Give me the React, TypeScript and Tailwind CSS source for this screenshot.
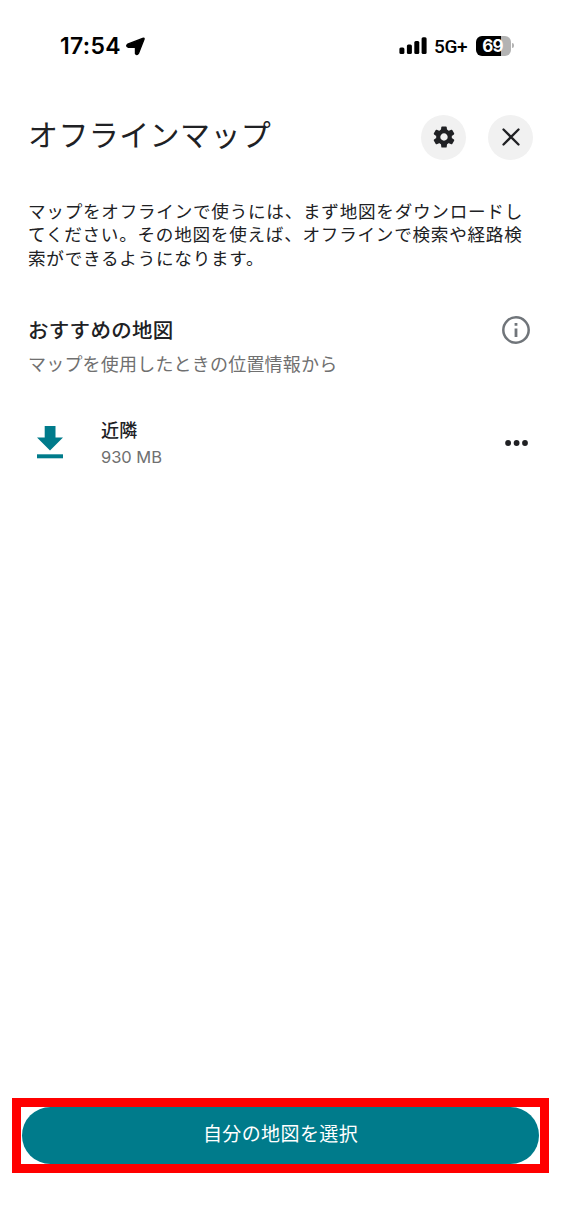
import React from "react";

function StatusBar() {
  return (
    <div className="flex h-[91px] items-center justify-between pl-[60px] pr-[47px] text-black">
      <div className="flex items-center gap-[5px]">
        <span className="mt-px font-['Inter',sans-serif] text-[23px] font-semibold leading-none tracking-[0.3px]">
          17:54
        </span>
        <svg width="19" height="19" viewBox="0 0 19 19" className="mt-px fill-current stroke-current" strokeWidth="1.4" strokeLinejoin="round">
          <path d="M16.7 1.4Q18.6.8 17.9 2.5L12.4 16.5Q11 18.8 9.5 16.5V11Q9.4 10.2 8.6 10.2H2.1Q-.4 9.2 1.7 7.2Z" />
        </svg>
      </div>

      <div className="flex items-center">
        <svg width="28" height="18" viewBox="0 0 28 18" className="fill-current">
          <rect x="0.4" y="10.5" width="5" height="6.5" rx="1.5" />
          <rect x="7.9" y="7.5" width="5" height="9.5" rx="1.5" />
          <rect x="15.3" y="4" width="5" height="13" rx="1.5" />
          <rect x="22.6" y="0.2" width="5" height="16.8" rx="1.5" />
        </svg>
        <span className="ml-[7px] mt-px w-[42px] font-['Roboto',sans-serif] text-[19px] font-medium leading-none tracking-[-0.4px]">
          5G+
        </span>
        <div className="flex h-5 w-[35px] items-center justify-center overflow-hidden rounded-[6px] bg-[linear-gradient(to_right,#000_25px,#b3b3b3_25px)] pr-[2px] pt-[2px]">
          <span className="font-['Inter',sans-serif] text-[17px] font-bold leading-none tracking-[-0.8px] text-white">
            69
          </span>
        </div>
        <span className="ml-px h-[5px] w-[2px] rounded-r-full bg-[#b3b3b3]" />
      </div>
    </div>
  );
}

const teeth = [0, 60, 120, 180, 240, 300];

function GearIcon() {
  return (
    <svg width="22" height="22" viewBox="-11 -11 22 22" className="fill-current">
      <circle r="5.8" fill="none" stroke="currentColor" strokeWidth="4.2" />
      {teeth.map((a) => (
        <path
          key={a}
          d="M-3.1-6.8-2.7-9.9Q-2.6-10.6-1.9-10.6H1.9Q2.6-10.6 2.7-9.9L3.1-6.8Z"
          transform={`rotate(${a})`}
        />
      ))}
    </svg>
  );
}

function DownloadIcon() {
  return (
    <svg width="26" height="33" viewBox="0 0 26 33" className="-mt-[5px] fill-[#007b8b]">
      <path d="M7.7 0H18.5V11.5H26L13 24.5 0 11.5H7.7Z" />
      <path d="M0 28.3H26V32.3H0Z" />
    </svg>
  );
}

export default function App() {
  return (
    <main className="flex h-[1221px] w-[561px] flex-col bg-white font-['Noto_Sans_CJK_JP',sans-serif] text-[#202124]">
      <StatusBar />

      {/* Title */}
      <header className="mt-px flex h-[90px] items-center justify-between px-[28px]">
        <h1 className="-mt-[8px] text-[30px] font-normal leading-none tracking-[0.4px]">
          オフラインマップ
        </h1>
        <div className="flex gap-[22px]">
          <button className="flex size-[45px] items-center justify-center rounded-full bg-[#f1f1f1]">
            <GearIcon />
          </button>
          <button className="flex size-[45px] items-center justify-center rounded-full bg-[#f1f1f1]">
            <svg width="18" height="18" viewBox="0 0 18 18" fill="none" stroke="currentColor" strokeWidth="2.3" strokeLinecap="round">
              <path d="M1.5 1.5 16.5 16.5M16.5 1.5 1.5 16.5" />
            </svg>
          </button>
        </div>
      </header>

      <p className="mt-[17px] whitespace-nowrap pl-[28px] text-[17.6px] leading-[23.4px] tracking-[0.74px]">
        マップをオフラインで使うには、まず地図をダウンロードし
        <br />
        てください。その地図を使えば、オフラインで検索や経路検
        <br />
        索ができるようになります。
      </p>

      {/* Suggested maps */}
      <section className="mt-[45px] flex justify-between pl-[28px] pr-[31px]">
        <div>
          <h2 className="text-[20.5px] font-medium leading-[30px] tracking-[0.3px]">おすすめの地図</h2>
          <p className="mt-[6px] text-[18px] leading-[26px] tracking-[0.2px] text-[#707070]">
            マップを使用したときの位置情報から
          </p>
        </div>
        <svg width="28" height="28" viewBox="0 0 28 28" className="mt-[2px] text-[#70757a]">
          <circle cx="14" cy="14" r="12.7" fill="none" stroke="currentColor" strokeWidth="2.5" />
          <path d="M12.6 7H15.4V9.8H12.6ZM12.6 12.5H15.4V21H12.6Z" fill="currentColor" />
        </svg>
      </section>

      <section className="mt-[39px] flex h-[60px] items-center pl-[37px] pr-[32px]">
        <DownloadIcon />
        <div className="ml-[38px] -mt-[4px]">
          <p className="text-[18px] font-medium leading-[28px] tracking-[0.2px]">近隣</p>
          <p className="mt-px font-['Inter',sans-serif] text-[16.5px] leading-[27px] tracking-[-0.05px] text-[#707070]">
            930 MB
          </p>
        </div>
        <svg width="24" height="6" viewBox="0 0 24 6" className="-mt-[4px] ml-auto fill-current">
          <circle cx="3.1" cy="3" r="2.9" />
          <circle cx="11.6" cy="3" r="2.9" />
          <circle cx="20" cy="3" r="2.9" />
        </svg>
      </section>

      <div className="mx-[12px] mb-[48px] mt-auto h-[75px] border-[9px] border-[#ff0000] px-px">
        <button className="flex h-[56.5px] w-full items-center justify-center rounded-full bg-[#007b8b] pb-[5px] text-[19px] leading-none tracking-[0.4px] text-white">
          自分の地図を選択
        </button>
      </div>
    </main>
  );
}
